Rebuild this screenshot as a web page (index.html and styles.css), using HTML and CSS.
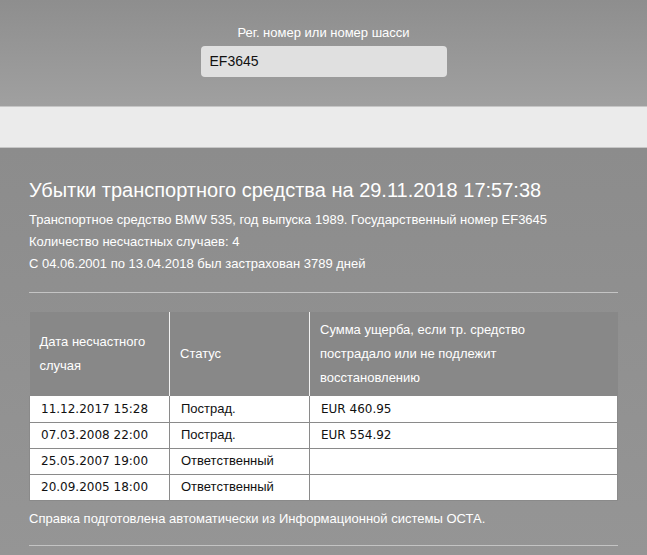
FILE: index.html
```html
<!DOCTYPE html>
<html>
<head>
<meta charset="utf-8">
<link rel="stylesheet" href="styles.css">
</head>
<body>
<div class="search">
  <div class="search-label">Рег. номер или номер шасси</div>
  <div class="search-input">EF3645</div>
</div>
<div class="band"></div>
<div class="main">
  <h1 class="title">Убытки транспортного средства на 29.11.2018 17:57:38</h1>
  <p class="info">Транспортное средство BMW 535, год выпуска 1989. Государственный номер EF3645</p>
  <p class="info">Количество несчастных случаев: 4</p>
  <p class="info">С 04.06.2001 по 13.04.2018 был застрахован 3789 дней</p>
  <div class="rule"></div>
  <table class="claims">
    <thead>
      <tr>
        <th class="c1">Дата несчастного случая</th>
        <th class="c2">Статус</th>
        <th class="c3">Сумма ущерба, если тр. средство пострадало или не подлежит восстановлению</th>
      </tr>
    </thead>
    <tbody>
      <tr><td class="mono">11.12.2017 15:28</td><td>Пострад.</td><td class="mono">EUR 460.95</td></tr>
      <tr><td class="mono">07.03.2008 22:00</td><td>Пострад.</td><td class="mono">EUR 554.92</td></tr>
      <tr><td class="mono">25.05.2007 19:00</td><td>Ответственный</td><td class="mono"></td></tr>
      <tr><td class="mono">20.09.2005 18:00</td><td>Ответственный</td><td class="mono"></td></tr>
    </tbody>
  </table>
  <p class="note">Справка подготовлена автоматически из Информационной системы ОСТА.</p>
  <div class="rule rule-bottom"></div>
</div>
</body>
</html>
```

FILE: styles.css
```css
html, body {
  margin: 0;
  padding: 0;
}
body {
  font-family: "Liberation Sans", Arial, sans-serif;
  background: #939393;
  color: #fff;
}
.search {
  height: 106px;
  background: linear-gradient(#8e8e8e, #a0a0a0);
  display: flex;
  flex-direction: column;
  align-items: center;
  padding-top: 25px;
  box-sizing: border-box;
}
.search-label {
  font-size: 13px;
  line-height: 16px;
  color: #fff;
  margin-bottom: 5px;
}
.search-input {
  width: 246px;
  height: 31px;
  box-sizing: border-box;
  background: #e0e0e0;
  border-radius: 4px;
  color: #111;
  font-size: 14px;
  line-height: 31px;
  padding-left: 9px;
}
.band {
  height: 42px;
  box-sizing: border-box;
  background: #ebebeb;
  border-top: 1px solid #c6c6c6;
  border-bottom: 1px solid #c6c6c6;
}
.main {
  background: linear-gradient(#8c8c8c, #959595);
  padding: 30px 29px 10px 29px;
  height: 407px;
  box-sizing: border-box;
}
.title {
  font-weight: normal;
  font-size: 20px;
  line-height: 24px;
  margin: 0 0 7px 0;
}
.info {
  font-size: 13px;
  line-height: 22px;
  margin: 0;
}
.rule {
  height: 1px;
  background: #c4c4c4;
  margin-top: 17px;
}
.claims {
  margin-top: 19px;
  width: 589px;
  border-collapse: collapse;
  font-size: 13px;
}
.claims th {
  background: #888888;
  color: #fff;
  font-weight: normal;
  text-align: left;
  line-height: 24px;
  padding: 6px 10px 6px 10px;
  height: 84px;
  box-sizing: border-box;
  vertical-align: middle;
  border-left: 1px solid #f2f2f2;
}
.claims th:first-child {
  border-left: none;
}
.claims th.c3 {
  padding-right: 60px;
}
.claims .c1 { width: 140px; }
.claims .c2 { width: 140px; }
.claims td {
  background: #fff;
  color: #111;
  height: 26px;
  box-sizing: border-box;
  padding: 0 10px 0 11px;
  border: 1px solid #8a8a8a;
  border-top: none;
  line-height: 24px;
}
.claims td.mono {
  font-family: "DejaVu Sans", Verdana, sans-serif;
  font-size: 12px;
}
.note {
  font-size: 13px;
  line-height: 16px;
  margin: 10px 0 0 0;
}
.rule-bottom {
  margin-top: 18px;
}
```
